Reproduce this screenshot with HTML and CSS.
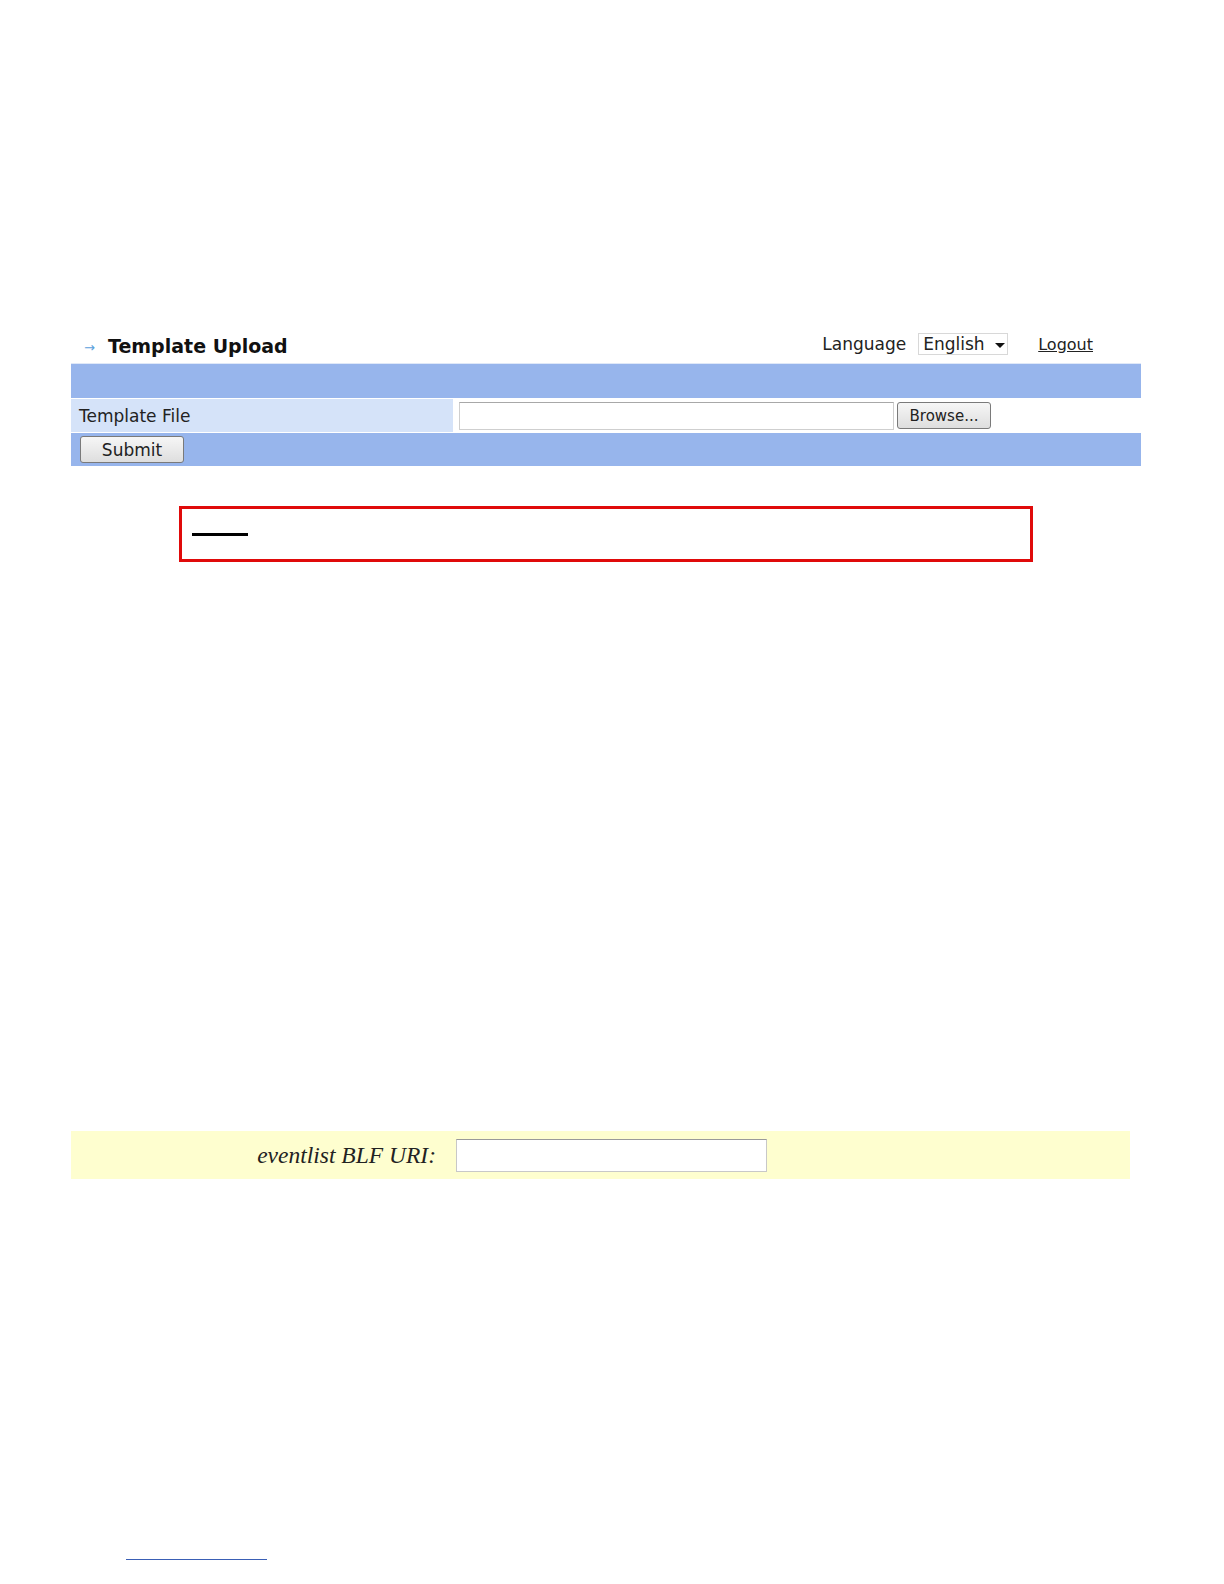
FILE: index.html
```html
<!DOCTYPE html>
<html>
<head>
<meta charset="utf-8">
<link rel="stylesheet" href="styles.css">
</head>
<body>
<div class="page">
  <div class="panel">
    <div class="head">
      <div class="title"><span class="arrow">&rarr;</span><span class="title-text">Template Upload</span></div>
      <div class="tools">
        <span class="lang">Language</span>
        <span class="select">English <span class="caret"></span></span>
        <a class="logout">Logout</a>
      </div>
    </div>
    <div class="bar top-bar"></div>
    <div class="row">
      <div class="label">Template File</div>
      <div class="field">
        <span class="file-input"></span>
        <span class="btn browse">Browse...</span>
      </div>
    </div>
    <div class="bar bottom-bar">
      <span class="btn submit">Submit</span>
    </div>
  </div>

  <div class="redbox"><span class="dash"></span></div>

  <div class="yellow">
    <span class="ylabel">eventlist BLF URI:</span>
    <span class="yinput"></span>
  </div>

  <div class="footline"></div>
</div>
</body>
</html>
```

FILE: styles.css
```css
html, body { margin: 0; padding: 0; background: #fff; overflow: hidden; }
.page { height: 1584px; position: relative; overflow: hidden; }

.panel { margin-left: 71px; width: 1070px; padding-top: 326px; }
.head { display: flex; align-items: center; justify-content: space-between; height: 36px; }
.title { display: flex; align-items: center; padding-left: 13px; }
.arrow { color: #5aa0dc; font-family: "DejaVu Sans", sans-serif; font-size: 13px; margin-top: 7px; width: 24px; }
.title-text { font-family: "DejaVu Sans", Verdana, sans-serif; font-weight: bold; font-size: 19px; color: #111; margin-top: 3px; }
.tools { display: flex; align-items: center; padding-right: 48px; font-family: "DejaVu Sans", Verdana, sans-serif; font-size: 17px; color: #222; }
.lang { margin-right: 12px; }
.select { display: inline-flex; align-items: center; height: 22px; width: 90px; border: 1px solid #d8d8d8; box-sizing: border-box; padding-left: 4px; background: #fff; }
.caret { width: 0; height: 0; border-left: 5px solid transparent; border-right: 5px solid transparent; border-top: 5px solid #111; margin-left: 10px; margin-top: 3px; }
.logout { margin-left: 30px; text-decoration: underline; font-size: 16px; color: #222; }

.bar { background: #97b5ec; }
.top-bar { height: 34px; margin-top: 1px; border-top: 1px solid #dfe8f8; }
.row { display: flex; height: 35px; border-top: 1px dashed #fff; border-bottom: 1px dashed #fff; box-sizing: border-box; }
.label { width: 382px; background: #d5e3f9; font-family: "DejaVu Sans", Verdana, sans-serif; font-size: 17px; color: #222; padding-left: 8px; display: flex; align-items: center; box-sizing: border-box; }
.field { flex: 1; display: flex; align-items: center; padding-left: 6px; background: #fff; }
.file-input { width: 435px; height: 28px; border: 1px solid #cfcfcf; border-top-color: #a8a8a8; box-sizing: border-box; background: #fff; }
.btn { display: inline-flex; align-items: center; justify-content: center; box-sizing: border-box; border: 1px solid #7a7a7a; border-radius: 3px; background: linear-gradient(#f6f6f6, #dedede); font-family: "DejaVu Sans", Verdana, sans-serif; color: #222; }
.browse { width: 94px; height: 27px; margin-left: 3px; font-size: 15px; }
.bottom-bar { height: 33px; display: flex; align-items: center; padding-left: 9px; }
.submit { width: 104px; height: 27px; font-size: 17px; }

.redbox { position: absolute; left: 179px; top: 506px; width: 854px; height: 56px; border: 3px solid #e00a0a; box-sizing: border-box; display: flex; align-items: center; padding-left: 10px; }
.dash { width: 56px; height: 3px; background: #000; }

.yellow { position: absolute; left: 71px; top: 1131px; width: 1059px; height: 48px; background: #fefecf; display: flex; align-items: center; }
.ylabel { width: 365px; text-align: right; font-family: "Liberation Serif", "Times New Roman", serif; font-style: italic; font-size: 23.5px; color: #222; }
.yinput { margin-left: 20px; width: 311px; height: 33px; border: 1px solid #c8c8c8; border-top-color: #9a9a9a; box-sizing: border-box; background: #fff; }

.footline { position: absolute; left: 126px; top: 1559px; width: 141px; height: 1px; background: #3a5fb5; }
```
